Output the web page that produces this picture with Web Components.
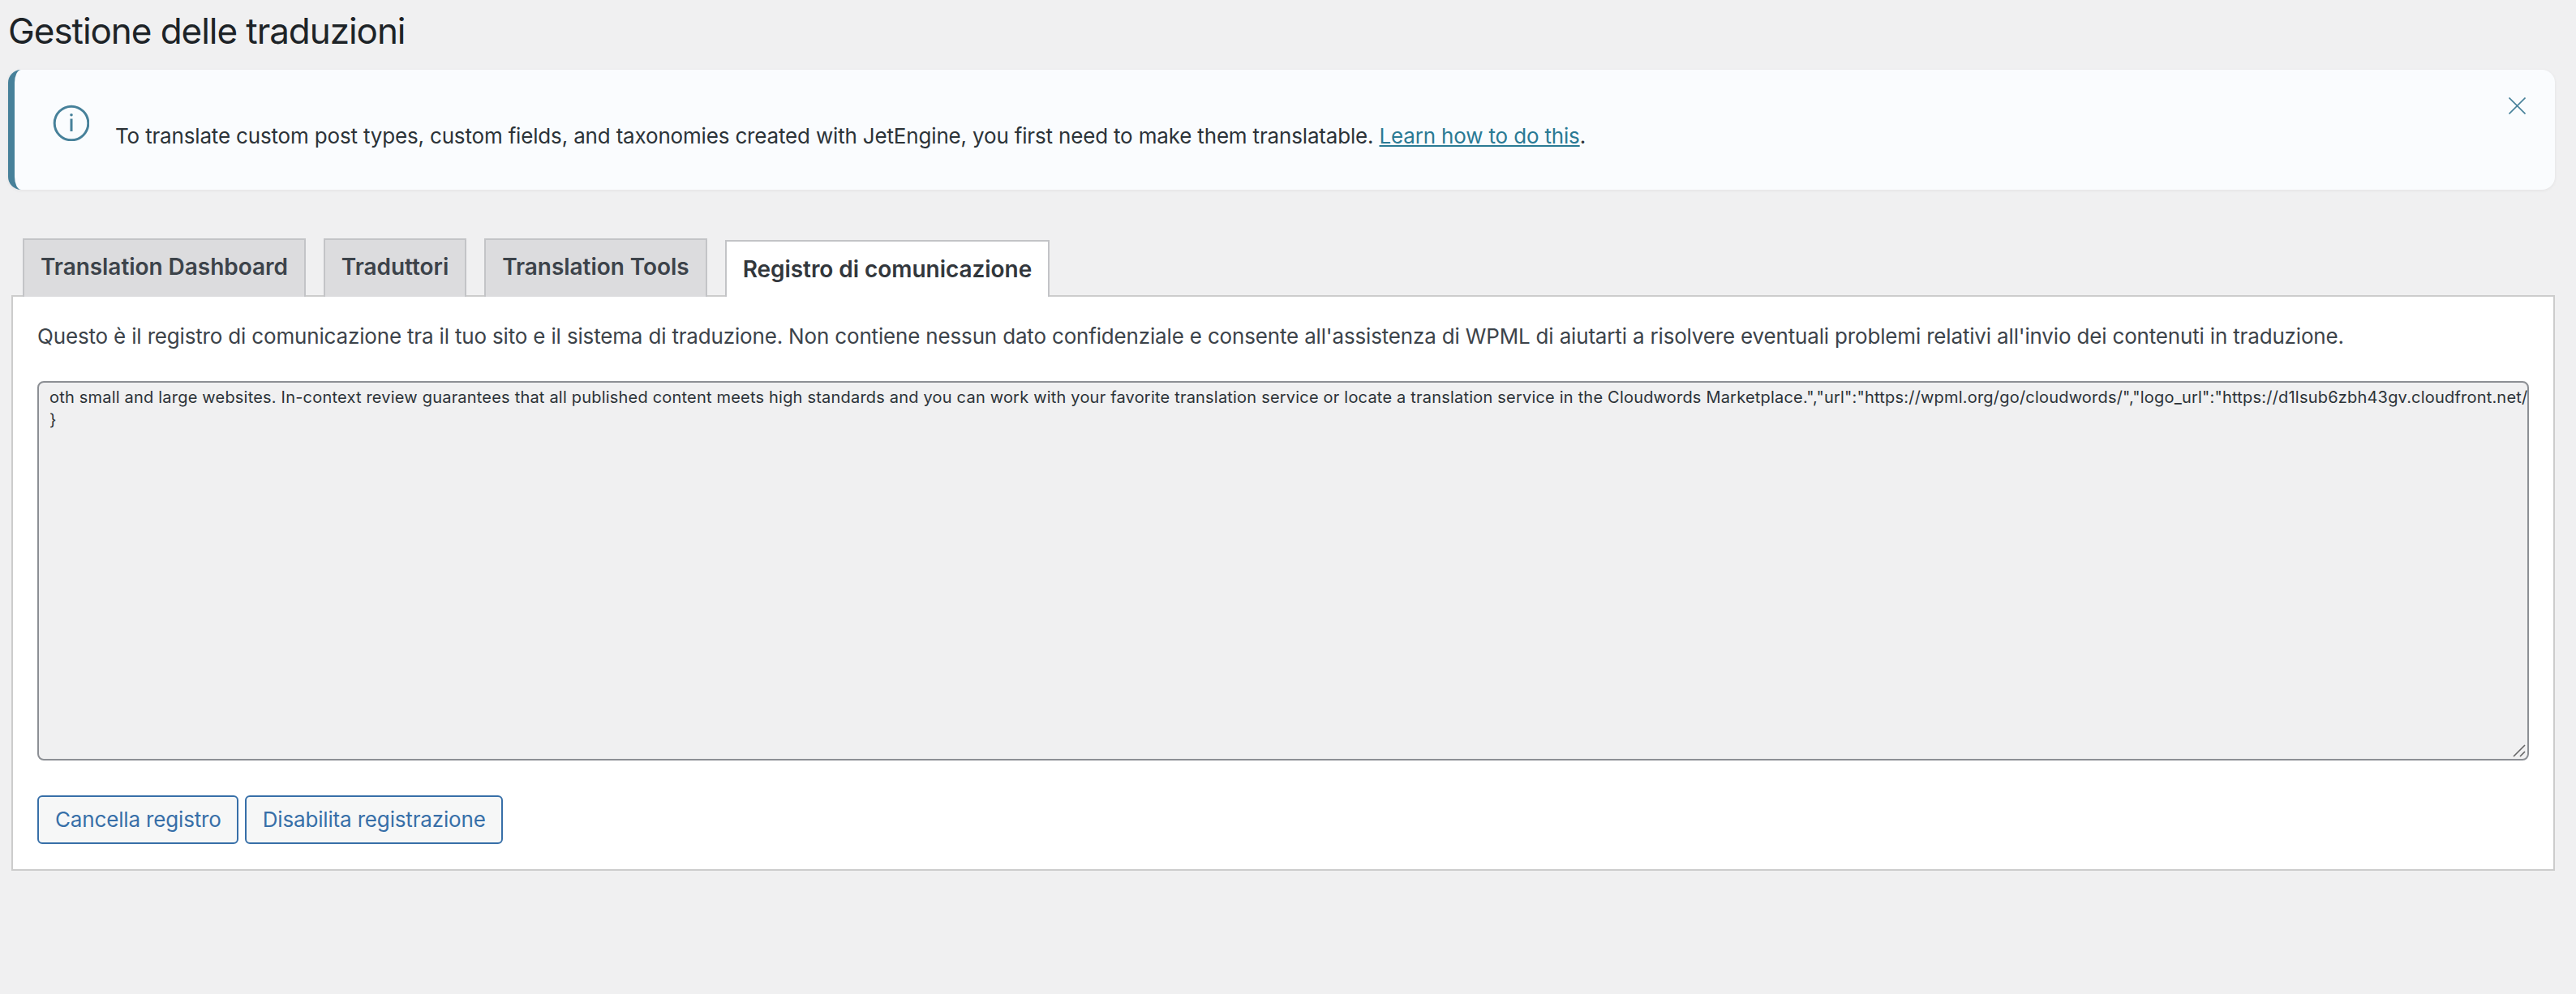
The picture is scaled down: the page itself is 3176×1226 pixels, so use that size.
<!DOCTYPE html>
<html lang="it">
<head>
<meta charset="utf-8">
<title>Gestione delle traduzioni</title>
<style>
  html, body { margin: 0; padding: 0; background: #f0f0f1; }
  body { font-family: Inter, "Liberation Sans", sans-serif; color: #3c434a; }
</style>
</head>
<body>
<wpml-page heading="Gestione delle traduzioni">
  <wpml-notice>
    To translate custom post types, custom fields, and taxonomies created with JetEngine, you first need to make them translatable. <a href="#">Learn how to do this</a>.
  </wpml-notice>
  <wpml-tabs>
    <wpml-tab>Translation Dashboard</wpml-tab>
    <wpml-tab>Traduttori</wpml-tab>
    <wpml-tab>Translation Tools</wpml-tab>
    <wpml-tab active>Registro di comunicazione</wpml-tab>
  </wpml-tabs>
  <wpml-panel>
    <p slot="intro">Questo è il registro di comunicazione tra il tuo sito e il sistema di traduzione. Non contiene nessun dato confidenziale e consente all'assistenza di WPML di aiutarti a risolvere eventuali problemi relativi all'invio dei contenuti in traduzione.</p>
    <wpml-log slot="log">oth small and large websites. In-context review guarantees that all published content meets high standards and you can work with your favorite translation service or locate a translation service in the Cloudwords Marketplace.","url":"https://wpml.org/go/cloudwords/","logo_url":"https://d1lsub6zbh43gv.cloudfront.net/
}</wpml-log>
    <wpml-button slot="actions">Cancella registro</wpml-button>
    <wpml-button slot="actions">Disabilita registrazione</wpml-button>
  </wpml-panel>
</wpml-page>

<script>
// Small helper so each component can declare its markup in one place
function shadow(el, html) {
  el.attachShadow({ mode: 'open' }).innerHTML = html;
}

class WpmlPage extends HTMLElement {
  connectedCallback() {
    if (this.shadowRoot) return;
    shadow(this, `
      <style>
        :host { display: block; padding: 0 26px 0 10px; box-sizing: border-box; width: 3176px; }
        h1 { margin: 0; padding: 12px 0 0 0; font-size: 44px; line-height: 52px; height: 74px; box-sizing: border-box;
             font-weight: 400; color: #1d2327; letter-spacing: -1.05px; }
      </style>
      <h1>${this.getAttribute('heading')}</h1>
      <slot></slot>
    `);
  }
}

class WpmlNotice extends HTMLElement {
  constructor() {
    super();
    shadow(this, `
      <style>
        :host { display: block; }
        .box { position: relative; height: 148px; box-sizing: border-box; margin-top: 12px;
               background: #fafcfe; border-left: 8px solid #47819a; border-radius: 16px;
               box-shadow: 0 1px 4px rgba(0,0,0,.06); font-size: 26px; line-height: 36px; color: #2c3338;
               letter-spacing: -0.17px; }
        .icon { position: absolute; left: 47px; top: 43px; width: 45px; height: 45px; }
        .text { position: absolute; left: 124px; top: 64px; white-space: nowrap; }
        .close { position: absolute; right: 36px; top: 34px; width: 21px; height: 21px; }
        ::slotted(a) { color: #2a7a94; }
      </style>
      <div class="box">
        <svg class="icon" viewBox="0 0 45 45" fill="none" stroke="#47819a">
          <circle cx="23" cy="23" r="20.8" stroke-width="3"/>
          <path d="M23 17.5v15.5" stroke-width="3"/>
          <circle cx="23" cy="12.8" r="1.8" fill="#47819a" stroke="none"/>
        </svg>
        <div class="text"><slot></slot></div>
        <svg class="close" viewBox="0 0 21 21" fill="none" stroke="#47819a" stroke-width="1.6">
          <path d="M.5.5l20 20M20.5.5l-20 20"/>
        </svg>
      </div>
    `);
  }
}

class WpmlTabs extends HTMLElement {
  constructor() {
    super();
    shadow(this, `
      <style>
        :host { display: flex; align-items: flex-end; gap: 22px; margin: 60px 0 -2px 18px; height: 72px;
                position: relative; z-index: 1; }
      </style>
      <slot></slot>
    `);
  }
}

class WpmlTab extends HTMLElement {
  constructor() {
    super();
    shadow(this, `
      <style>
        :host { display: block; box-sizing: border-box; height: 72px; padding: 0 20px; border: 2px solid #c3c4c7;
                border-bottom: 0; background: #dcdcde; color: #3c434a; font-size: 28px; font-weight: 600;
                line-height: 67px; white-space: nowrap; letter-spacing: -0.05px; }
        :host([active]) { background: #fff; color: #32373c; height: 70px; line-height: 69px; }
      </style>
      <slot></slot>
    `);
  }
}

class WpmlPanel extends HTMLElement {
  constructor() {
    super();
    shadow(this, `
      <style>
        :host { display: block; box-sizing: border-box; margin-left: 4px; height: 710px; padding: 0 30px;
                background: #fff; border: 2px solid #ccc; }
        ::slotted(p) { margin: 0; padding-top: 31px; height: 104px; box-sizing: border-box; font-size: 26px;
                       line-height: 36px; color: #3c434a; white-space: nowrap; letter-spacing: -0.17px; }
        .actions { display: flex; gap: 8px; margin-top: 43px; }
      </style>
      <slot name="intro"></slot>
      <slot name="log"></slot>
      <div class="actions"><slot name="actions"></slot></div>
    `);
  }
}

class WpmlLog extends HTMLElement {
  constructor() {
    super();
    shadow(this, `
      <style>
        :host { display: block; position: relative; box-sizing: border-box; height: 468px;
                background: #f0f0f1; border: 2px solid #8c8f94; border-radius: 8px; overflow: hidden;
                font-size: 20px; line-height: 28px; color: #2c3338; letter-spacing: 0.2px; }
        .text { padding: 4px 0 0 13px; white-space: pre; }
        svg { position: absolute; right: 2px; bottom: 2px; width: 16px; height: 16px; }
      </style>
      <div class="text"><slot></slot></div>
      <svg viewBox="0 0 16 16" stroke="#666" stroke-width="1.6" fill="none"><path d="M1 15L15 1M9 15l6-6"/></svg>
    `);
  }
}

class WpmlButton extends HTMLElement {
  constructor() {
    super();
    shadow(this, `
      <style>
        :host { display: block; box-sizing: border-box; height: 60px; padding: 0 19px 0 20px; background: #f6f7f7;
                border: 2px solid #376fa8; border-radius: 6px; color: #376fa8; font-size: 26px; line-height: 56px;
                white-space: nowrap; letter-spacing: -0.16px; }
      </style>
      <slot></slot>
    `);
  }
}

customElements.define('wpml-page', WpmlPage);
customElements.define('wpml-notice', WpmlNotice);
customElements.define('wpml-tabs', WpmlTabs);
customElements.define('wpml-tab', WpmlTab);
customElements.define('wpml-panel', WpmlPanel);
customElements.define('wpml-log', WpmlLog);
customElements.define('wpml-button', WpmlButton);
</script>
</body>
</html>
